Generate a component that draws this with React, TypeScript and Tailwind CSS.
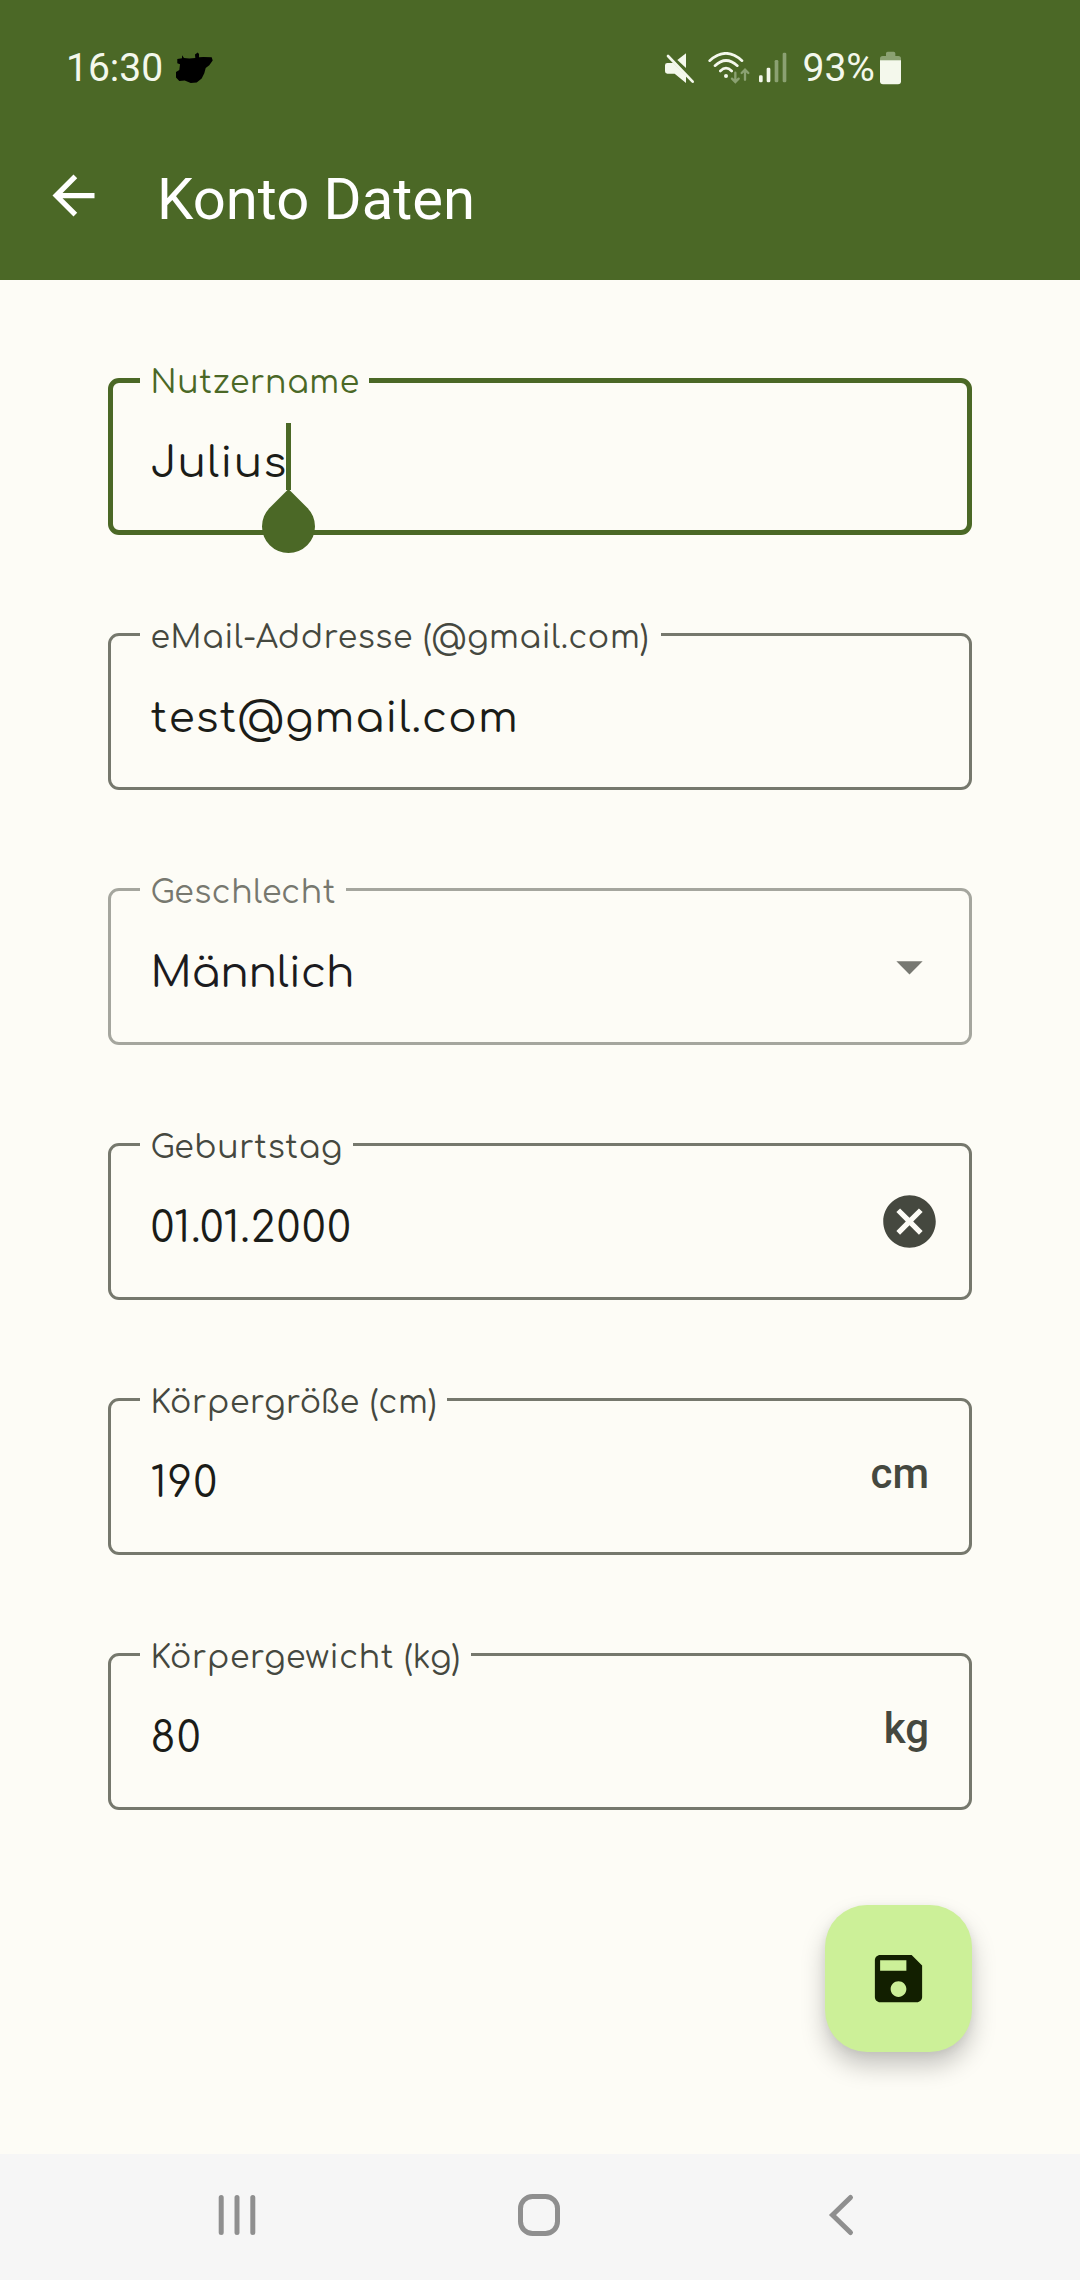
import React from "react";
import type { ReactNode } from "react";

type FieldProps = {
  label: string;
  labelClass: string;
  value: string;
  outline?: string;
  valueClass?: string;
  children?: ReactNode;
};

function Field({
  label,
  labelClass,
  value,
  outline = "border-[3px] border-[#76786d]",
  valueClass = "tracking-[1.25px] text-[#1b1c18]",
  children,
}: FieldProps) {
  return (
    <div className="relative flex h-[157px] items-start pt-[56px] pl-[42.5px]">
      <div className={`absolute inset-0 rounded-[11px] ${outline}`} />
      <span
        className={`absolute -top-[13px] left-[32px] bg-[#fdfcf6] pl-[10.5px] text-[31.5px] leading-[36px] tracking-[0.7px] whitespace-nowrap ${labelClass}`}
      >
        {label}
      </span>
      <span className={`text-[42px] leading-[60px] whitespace-nowrap ${valueClass}`}>{value}</span>
      {children}
    </div>
  );
}

function Caret() {
  return (
    <span className="relative -mt-[11px] -ml-px h-[67px] w-[5px] shrink-0 bg-[#4b6826]">
      <svg className="absolute top-[66px] -left-[25px] h-[64px] w-[55px]" viewBox="0 0 55 64" fill="#4b6826">
        <path d="M27.5 0 8.76 18.76a26.5 26.5 0 1 0 37.48 0z" />
      </svg>
    </span>
  );
}

function StatusBar() {
  return (
    <div className="flex h-[136px] items-center pl-[66px] text-[39px] leading-[46px] text-[#f4f8ec]">
      <span className="w-[97px]">16:30</span>
      <svg className="ml-[13px] h-[32px] w-[37px]" viewBox="0 0 37 32" fill="#000">
        <path d="M1.3 7 6 6.3V3.3L8 6l5.3.6 6-.6-.3-3.4L21.7.6 23 2v3.3l4.3-.3 8.4.3 1 3.3-3.4 4.7-3.6 2.700-1.400 5.300-2.600 5.300-5 4-6 .4-6-2.400-5.400.4L0 25.600V20l3.300-2L4 12.300l-2.700-1z" />
      </svg>
      <svg className="ml-[452px] h-[32px] w-[30px]" viewBox="75 66 90 96" fill="currentColor">
        <path d="M82 99h18l38 38v22l-34-28H82q-7 0-7-7v-18q0-7 7-7z" />
        <path d="m112 90 26-20v44z" />
        <path d="m84 78 74 77" stroke="currentColor" strokeWidth="8" strokeLinecap="round" />
      </svg>
      <svg className="ml-[13px] h-[32px] w-[42px]" viewBox="204 66 126 96" fill="none" strokeLinecap="round">
        <g stroke="#f4f8ec" strokeWidth="8">
          <path d="M209 92q49-44 97 0M225 107q33-31 67 0M241 123q17-17 34 0" />
        </g>
        <circle cx="258" cy="138" r="6" fill="#f4f8ec" />
        <g stroke="#8ba172" strokeWidth="7">
          <path d="M286 128v27M276 146l10 10 10-10M315 149v-28M305 129l10-10 10 10" />
        </g>
      </svg>
      <svg className="ml-[9px] h-[32px] w-[28px]" viewBox="358 66 84 96">
        <rect x="358" y="136" width="11" height="21" rx="4" fill="#f4f8ec" />
        <rect x="381" y="113" width="11" height="44" rx="4" fill="#f4f8ec" />
        <rect x="405" y="90" width="11" height="67" rx="4" fill="#8ba172" />
        <rect x="429" y="68" width="11" height="89" rx="4" fill="#8ba172" />
      </svg>
      <span className="ml-[15.5px] w-[72px]">93%</span>
      <svg className="ml-[5.5px] h-[34px] w-[21px]" viewBox="720 63 63 102">
        <path d="M720 92v-6q0-8 8-8h10v-8q0-5 5-5h18q5 0 5 5v8h9q8 0 8 8v6z" fill="#8ba172" />
        <path d="M720 91h63v63q0 9-9 9h-45q-9 0-9-9z" fill="#f4f8ec" />
      </svg>
    </div>
  );
}

export default function App() {
  return (
    <div className="flex h-[2280px] w-[1080px] flex-col overflow-hidden bg-[#fdfcf6] font-[Roboto,sans-serif]">
      <header className="h-[280px] shrink-0 bg-[#4b6826]">
        <StatusBar />
        <div className="flex items-start pl-[42px] text-white">
          <svg className="mt-[28px] size-[63px]" viewBox="0 0 24 24" fill="currentColor">
            <path d="M20 11H7.83l5.59-5.59L12 4l-8 8 8 8 1.41-1.41L7.83 13H20v-2z" />
          </svg>
          <h1 className="mt-[29px] ml-[52px] text-[58px] leading-[68px]">Konto Daten</h1>
        </div>
      </header>

      <main className="flex flex-1 flex-col px-[108px] pt-[98px]">
        <div className="flex flex-col gap-[98px] font-[Comfortaa,Quicksand,Inter,sans-serif]">
          <Field
            label="Nutzername"
            labelClass="w-[229px] text-[#4b6826]"
            value="Julius"
            outline="border-[5px] border-[#4b6826]"
          >
            <Caret />
          </Field>
          <Field
            label="eMail-Addresse (@gmail.com)"
            labelClass="w-[521px] text-[#45483f]"
            value="test@gmail.com"
          />
          <Field
            label="Geschlecht"
            labelClass="w-[206px] text-[#77786f]"
            value="Männlich"
            outline="border-[3px] border-[#a5a69e]"
            valueClass="text-[#1b1b1f]"
          >
            <svg className="mt-[-9px] mr-[31px] ml-auto size-[63px]" viewBox="0 0 24 24" fill="#777871">
              <path d="m7 10 5 5 5-5z" />
            </svg>
          </Field>
          <Field label="Geburtstag" labelClass="w-[213px] text-[#45483f]" value="01.01.2000">
            <svg className="mt-[-9px] mr-[31px] ml-auto size-[63px]" viewBox="0 0 24 24" fill="#45483f">
              <path d="M12 2C6.47 2 2 6.47 2 12s4.47 10 10 10 10-4.47 10-10S17.53 2 12 2zm5 13.59L15.59 17 12 13.41 8.41 17 7 15.59 10.59 12 7 8.41 8.41 7 12 10.59 15.59 7 17 8.41 13.41 12 17 15.59z" />
            </svg>
          </Field>
          <Field label="Körpergröße (cm)" labelClass="w-[307px] text-[#45483f]" value="190">
            <span className="-mt-[5px] mr-[43px] ml-auto font-[Roboto,sans-serif] text-[42px] leading-[50px] font-medium text-[#45483f]">
              cm
            </span>
          </Field>
          <Field label="Körpergewicht (kg)" labelClass="w-[331px] text-[#45483f]" value="80">
            <span className="-mt-[5px] mr-[43px] ml-auto font-[Roboto,sans-serif] text-[42px] leading-[50px] font-medium text-[#45483f]">
              kg
            </span>
          </Field>
        </div>

        <button className="mt-[95px] flex size-[147px] items-center justify-center self-end rounded-[42px] bg-[#ccf098] shadow-[0_14px_24px_rgba(0,0,0,0.22),0_2px_10px_rgba(0,0,0,0.06)]">
          <svg className="size-[63px]" viewBox="0 0 24 24" fill="#121f00">
            <path d="M17 3H5c-1.11 0-2 .9-2 2v14c0 1.1.89 2 2 2h14c1.1 0 2-.9 2-2V7l-4-4zm-5 16c-1.66 0-3-1.34-3-3s1.34-3 3-3 3 1.34 3 3-1.34 3-3 3zm3-10H5V5h10v4z" />
          </svg>
        </button>
      </main>

      <nav className="flex h-[126px] shrink-0 items-start bg-[#f6f6f6] pt-[39px] pl-[216px]">
        <svg className="h-[44px] w-[42px]" viewBox="0 0 42 44" stroke="#8f8f8f" strokeWidth="5" strokeLinecap="round">
          <path d="M5.2 4.5v35M21 4.5v35M36.8 4.5v35" />
        </svg>
        <svg className="ml-[260px] h-[44px] w-[42px]" viewBox="0 0 42 44" fill="none" stroke="#8f8f8f" strokeWidth="5">
          <rect x="2.5" y="3.5" width="37" height="37" rx="12" />
        </svg>
        <svg
          className="ml-[267px] h-[44px] w-[28px]"
          viewBox="0 0 28 44"
          fill="none"
          stroke="#8f8f8f"
          strokeWidth="5"
          strokeLinecap="round"
        >
          <path d="M23.5 4.5 5.5 22l18 17.5" />
        </svg>
      </nav>
    </div>
  );
}
